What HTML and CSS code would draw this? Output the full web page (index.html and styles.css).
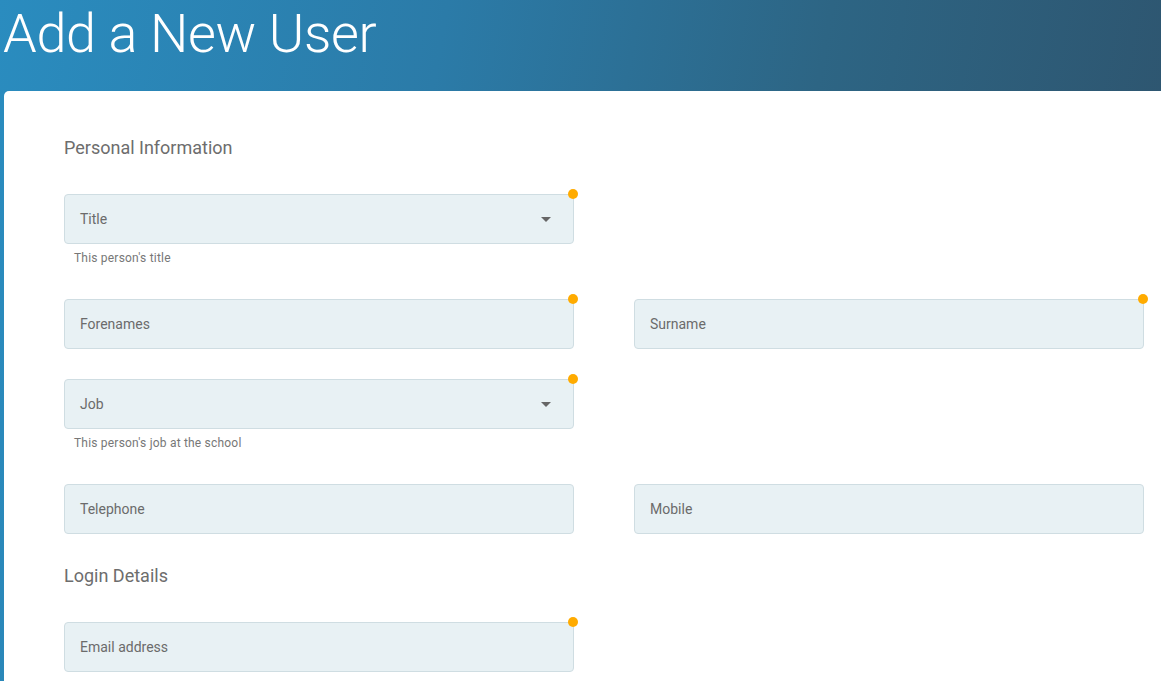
FILE: index.html
```html
<!DOCTYPE html>
<html lang="en">
<head>
<meta charset="utf-8">
<title>Add a New User</title>
<link rel="stylesheet" href="styles.css">
</head>
<body>
<div class="page">
  <header class="header">
    <h1 class="page-title">Add a New User</h1>
  </header>
  <main class="card">
    <section class="section">
      <h2 class="section-title">Personal Information</h2>
      <div class="row">
        <div class="field-wrap">
          <div class="field select required"><span class="label">Title</span><span class="caret"></span></div>
          <div class="helper">This person's title</div>
        </div>
      </div>
      <div class="row">
        <div class="field-wrap">
          <div class="field required"><span class="label">Forenames</span></div>
        </div>
        <div class="field-wrap">
          <div class="field required"><span class="label">Surname</span></div>
        </div>
      </div>
      <div class="row">
        <div class="field-wrap">
          <div class="field select required"><span class="label">Job</span><span class="caret"></span></div>
          <div class="helper">This person's job at the school</div>
        </div>
      </div>
      <div class="row">
        <div class="field-wrap">
          <div class="field"><span class="label">Telephone</span></div>
        </div>
        <div class="field-wrap">
          <div class="field"><span class="label">Mobile</span></div>
        </div>
      </div>
    </section>
    <section class="section">
      <h2 class="section-title">Login Details</h2>
      <div class="row">
        <div class="field-wrap">
          <div class="field required"><span class="label">Email address</span></div>
        </div>
      </div>
    </section>
  </main>
</div>
</body>
</html>
```

FILE: styles.css
```css
* { box-sizing: border-box; }
html, body { margin: 0; padding: 0; height: 100%; overflow: hidden; }
body {
  font-family: Roboto, "Liberation Sans", Arial, sans-serif;
  background: linear-gradient(100deg, #2a8cbf 0%, #2b7ba8 35%, #2d6584 65%, #2e526b 100%);
}
.page { min-height: 100vh; display: flex; flex-direction: column; }
.header { height: 91px; padding: 0 0 0 3px; }
.page-title {
  margin: 0;
  font-weight: 300;
  font-size: 54px;
  line-height: 68px;
  color: #ffffff;
  letter-spacing: -0.35px;
}
.card {
  flex: 1;
  margin-left: 4px;
  background: #ffffff;
  border-top-left-radius: 5px;
  padding: 45px 0 0 60px;
}
.section-title {
  margin: 0 0 34px 0;
  font-size: 18px;
  font-weight: 400;
  line-height: 24px;
  color: #6d6d6d;
}
.row { display: flex; gap: 60px; margin-bottom: 30px; }
.field-wrap { width: 510px; }
.field {
  position: relative;
  height: 50px;
  background: #e8f1f4;
  border: 1px solid #cfdde2;
  border-radius: 4px;
  display: flex;
  align-items: center;
  padding: 0 15px;
}
.label { font-size: 14px; color: #6b6b6b; }
.field.required::after {
  content: "";
  position: absolute;
  top: -6px;
  right: -5px;
  width: 10px;
  height: 10px;
  border-radius: 50%;
  background: #ffab00;
}
.caret {
  margin-left: auto;
  margin-right: 7px;
  width: 0;
  height: 0;
  border-left: 5px solid transparent;
  border-right: 5px solid transparent;
  border-top: 5px solid #666666;
}
.helper {
  margin: 7px 0 0 10px;
  font-size: 12px;
  line-height: 14px;
  color: #777777;
  height: 18px;
  letter-spacing: 0.2px;
}
```
